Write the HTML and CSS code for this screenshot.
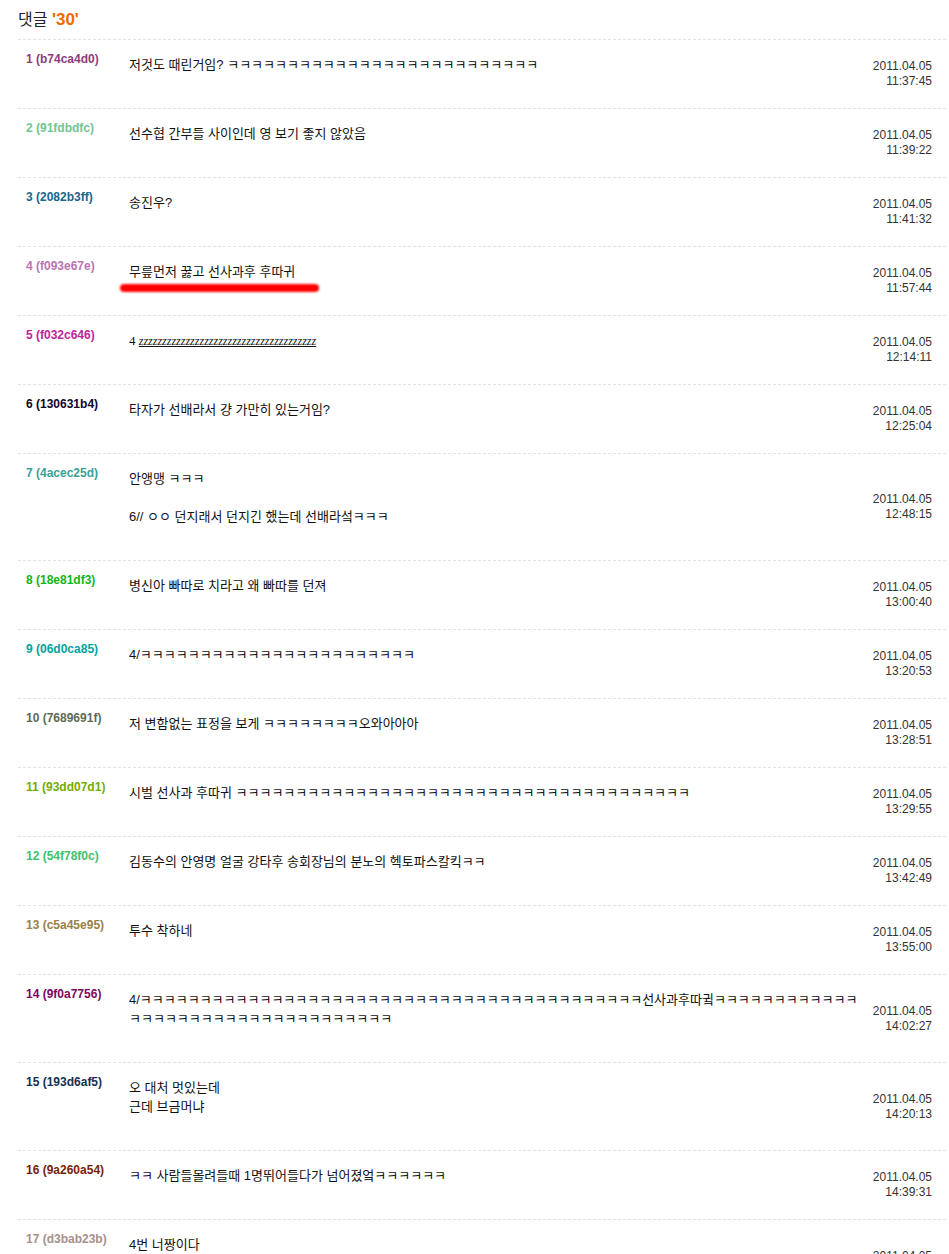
FILE: index.html
```html
<!DOCTYPE html>
<html lang="ko">
<head>
  <meta charset="UTF-8">
  <title>댓글</title>
  <link rel="stylesheet" href="styles.css">
</head>
<body>
  <div class="comments">
    <h2 class="comments-title">댓글 <span class="count">'30'</span></h2>

    <ul class="comment-list">
      <li class="comment">
        <div class="who" style="color:#8f3b80">1 (b74ca4d0)</div>
        <div class="text">저것도 때린거임? ㅋㅋㅋㅋㅋㅋㅋㅋㅋㅋㅋㅋㅋㅋㅋㅋㅋㅋㅋㅋㅋㅋㅋㅋㅋㅋ</div>
        <div class="date">2011.04.05<br>11:37:45</div>
      </li>
      <li class="comment">
        <div class="who" style="color:#71c593">2 (91fdbdfc)</div>
        <div class="text">선수협 간부들 사이인데 영 보기 좋지 않았음</div>
        <div class="date">2011.04.05<br>11:39:22</div>
      </li>
      <li class="comment">
        <div class="who" style="color:#19658c">3 (2082b3ff)</div>
        <div class="text">송진우?</div>
        <div class="date">2011.04.05<br>11:41:32</div>
      </li>
      <li class="comment">
        <div class="who" style="color:#bb73b3">4 (f093e67e)</div>
        <div class="text">무릎먼저 꿇고 선사과후 후따귀<span class="marker"></span></div>
        <div class="date">2011.04.05<br>11:57:44</div>
      </li>
      <li class="comment">
        <div class="who" style="color:#bb279a">5 (f032c646)</div>
        <div class="text serif">4 <u><i>zzzzzzzzzzzzzzzzzzzzzzzzzzzzzzzzzzzzzz</i></u></div>
        <div class="date">2011.04.05<br>12:14:11</div>
      </li>
      <li class="comment">
        <div class="who" style="color:#0f0526">6 (130631b4)</div>
        <div class="text">타자가 선배라서 걍 가만히 있는거임?</div>
        <div class="date">2011.04.05<br>12:25:04</div>
      </li>
      <li class="comment">
        <div class="who" style="color:#3aa197">7 (4acec25d)</div>
        <div class="text">안앵맹 ㅋㅋㅋ<br><br>6// ㅇㅇ 던지래서 던지긴 했는데 선배라섴ㅋㅋㅋ</div>
        <div class="date">2011.04.05<br>12:48:15</div>
      </li>
      <li class="comment">
        <div class="who" style="color:#13b517">8 (18e81df3)</div>
        <div class="text">병신아 빠따로 치라고 왜 빠따를 던져</div>
        <div class="date">2011.04.05<br>13:00:40</div>
      </li>
      <li class="comment">
        <div class="who" style="color:#05a29e">9 (06d0ca85)</div>
        <div class="text">4/ㅋㅋㅋㅋㅋㅋㅋㅋㅋㅋㅋㅋㅋㅋㅋㅋㅋㅋㅋㅋㅋㅋㅋ</div>
        <div class="date">2011.04.05<br>13:20:53</div>
      </li>
      <li class="comment">
        <div class="who" style="color:#5c6b52">10 (7689691f)</div>
        <div class="text">저 변함없는 표정을 보게 ㅋㅋㅋㅋㅋㅋㅋㅋ오와아아아</div>
        <div class="date">2011.04.05<br>13:28:51</div>
      </li>
      <li class="comment">
        <div class="who" style="color:#73ac05">11 (93dd07d1)</div>
        <div class="text">시벌 선사과 후따귀 ㅋㅋㅋㅋㅋㅋㅋㅋㅋㅋㅋㅋㅋㅋㅋㅋㅋㅋㅋㅋㅋㅋㅋㅋㅋㅋㅋㅋㅋㅋㅋㅋㅋㅋㅋㅋㅋㅋ</div>
        <div class="date">2011.04.05<br>13:29:55</div>
      </li>
      <li class="comment">
        <div class="who" style="color:#42c170">12 (54f78f0c)</div>
        <div class="text">김동수의 안영명 얼굴 강타후 송회장님의 분노의 헥토파스칼킥ㅋㅋ</div>
        <div class="date">2011.04.05<br>13:42:49</div>
      </li>
      <li class="comment">
        <div class="who" style="color:#9a8049">13 (c5a45e95)</div>
        <div class="text">투수 착하네</div>
        <div class="date">2011.04.05<br>13:55:00</div>
      </li>
      <li class="comment">
        <div class="who" style="color:#7c085d">14 (9f0a7756)</div>
        <div class="text">4/ㅋㅋㅋㅋㅋㅋㅋㅋㅋㅋㅋㅋㅋㅋㅋㅋㅋㅋㅋㅋㅋㅋㅋㅋㅋㅋㅋㅋㅋㅋㅋㅋㅋㅋㅋㅋㅋㅋㅋㅋㅋㅋ선사과후따귘ㅋㅋㅋㅋㅋㅋㅋㅋㅋㅋㅋㅋㅋㅋㅋㅋㅋㅋㅋㅋㅋㅋㅋㅋㅋㅋㅋㅋㅋㅋㅋㅋㅋㅋ</div>
        <div class="date">2011.04.05<br>14:02:27</div>
      </li>
      <li class="comment">
        <div class="who" style="color:#143053">15 (193d6af5)</div>
        <div class="text">오 대처 멋있는데<br>근데 브금머냐</div>
        <div class="date">2011.04.05<br>14:20:13</div>
      </li>
      <li class="comment">
        <div class="who" style="color:#781e08">16 (9a260a54)</div>
        <div class="text">ㅋㅋ 사람들몰려들때 1명뛰어들다가 넘어졌엌ㅋㅋㅋㅋㅋㅋ</div>
        <div class="date">2011.04.05<br>14:39:31</div>
      </li>
      <li class="comment">
        <div class="who" style="color:#a5918b">17 (d3bab23b)</div>
        <div class="text">4번 너짱이다<br>ㅋㅋㅋ</div>
        <div class="date">2011.04.05<br>14:51:08</div>
      </li>
    </ul>
  </div>
</body>
</html>
```

FILE: styles.css
```css
body { margin: 0; background: #fff; font-family: "Liberation Sans", "Noto Sans CJK KR", sans-serif; font-size: 12px; color: #111; }
.comments { margin-left: 18px; width: 928px; padding-top: 10px; }
.comments-title { margin: 0; padding-bottom: 9px; font-size: 16px; line-height: 20px; font-weight: normal; color: #222; }
.comments-title .count { font-family: "Liberation Sans", sans-serif; font-size: 17px; font-weight: bold; color: #f06a00; }
.comment-list { list-style: none; margin: 0; padding: 0; }
.comment { display: grid; grid-template-columns: 103px 736px 1fr; padding: 0 14px 0 8px; border-top: 1px dashed #e2e2e2; }
.who { padding-top: 10px; line-height: 19px; font-weight: bold; white-space: nowrap; }
.text { position: relative; padding: 15px 0 34px; font-size: 13px; line-height: 19px; color: #111; }
.text.serif { font-family: "Liberation Serif", "Noto Sans CJK KR", serif; }
.text.serif i { font-size: 12px; line-height: 12px; }
.text u { text-decoration-thickness: 1px; }
.marker { position: absolute; left: -9px; top: 37px; width: 199px; height: 8px; border-radius: 5px; background: #ff0000; filter: blur(1px); }
.date { align-self: center; text-align: right; line-height: 15px; color: #333; white-space: nowrap; }
```
